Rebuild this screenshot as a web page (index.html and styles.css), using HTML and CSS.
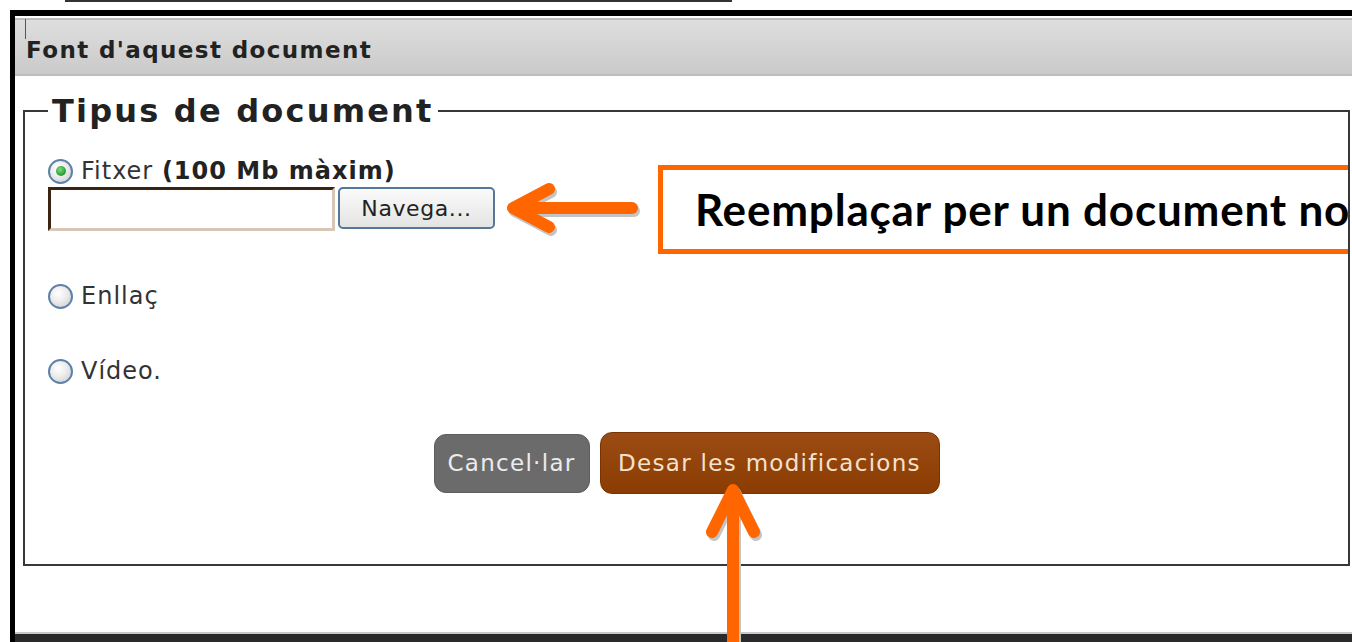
FILE: index.html
```html
<!DOCTYPE html>
<html lang="ca">
<head>
<meta charset="utf-8">
<title>Font d'aquest document</title>
<link rel="stylesheet" href="styles.css">
</head>
<body>
<div class="topline"></div>
<div class="frame">
  <div class="header"><span class="cursor"></span>Font d'aquest document</div>
  <fieldset class="doctype">
    <legend>Tipus de document</legend>
    <div class="opt opt-file"><span class="radio checked"></span><span class="lbl">Fitxer <b>(100 Mb màxim)</b></span></div>
    <div class="filerow"><span class="filebox"></span><span class="browse">Navega...</span></div>
    <div class="opt opt-link"><span class="radio"></span><span class="lbl">Enllaç</span></div>
    <div class="opt opt-video"><span class="radio"></span><span class="lbl">Vídeo.</span></div>
    <div class="actions">
      <button class="btn cancel">Cancel·lar</button>
      <button class="btn save">Desar les modificacions</button>
    </div>
  </fieldset>
  <div class="footer"></div>
</div>
<div class="callout">Reemplaçar per un document nou</div>
<svg class="arrows" width="1352" height="642" viewBox="0 0 1352 642">
  <g class="shadow" transform="translate(2 3)">
    <path d="M520 208 H632" stroke-linecap="butt"/>
    <path d="M549 189 L513 208 L549 227"/>
    <path d="M733 498 V660" stroke-linecap="butt"/>
    <path d="M712 532 L733 490 L754 532"/>
  </g>
  <g class="orange">
    <path d="M520 208 H632" stroke-linecap="butt"/>
    <path d="M549 189 L513 208 L549 227"/>
    <path d="M733 498 V660" stroke-linecap="butt"/>
    <path d="M712 532 L733 490 L754 532"/>
  </g>
</svg>
</body>
</html>
```
FILE: styles.css
```css
html, body {
  margin: 0;
  padding: 0;
}
body {
  width: 1352px;
  height: 642px;
  overflow: hidden;
  position: relative;
  background: #fff;
  font-family: "DejaVu Sans", Verdana, sans-serif;
  color: #333;
}
.topline {
  margin-left: 65px;
  width: 667px;
  height: 2px;
  background: #333;
}
.frame {
  margin: 8px 0 0 10px;
  border-top: 6px solid #000;
  border-left: 5px solid #000;
  height: 640px;
  display: flex;
  flex-direction: column;
}
.header {
  position: relative;
  margin-top: 2px;
  height: 48px;
  padding: 6px 0 0 11px;
  line-height: 48px;
  border-top: 2px solid #bdbdbd;
  border-bottom: 2px solid #bdbdbd;
  background: linear-gradient(#dedede, #cacaca);
  font-size: 23px;
  font-weight: bold;
  letter-spacing: 1.4px;
  color: #222;
}
.cursor {
  position: absolute;
  left: 10px;
  top: -1px;
  width: 1px;
  height: 20px;
  background: #555;
}
.doctype {
  margin: 16px 2px 0 8px;
  padding: 28px 23px 70px 23px;
  border: 2px solid #383838;
  min-width: 0;
}
.doctype legend {
  padding: 0 4px;
  font-size: 32px;
  font-weight: bold;
  letter-spacing: 2.2px;
  color: #222;
}
.opt {
  display: flex;
  align-items: center;
  height: 26px;
}
.opt-link { margin-top: 52px; }
.opt-video { margin-top: 49px; }
.radio {
  width: 25px;
  height: 25px;
  box-sizing: border-box;
  border-radius: 50%;
  border: 2px solid #5d81a8;
  background: radial-gradient(circle at 40% 35%, #ffffff 0%, #ececec 45%, #c9c9c9 100%);
  display: flex;
  align-items: center;
  justify-content: center;
  flex: none;
}
.radio.checked::after {
  content: "";
  width: 10px;
  height: 10px;
  border-radius: 50%;
  background: radial-gradient(circle at 40% 35%, #7fdc7f 0%, #2ea23c 60%, #1f8a2c 100%);
}
.lbl {
  margin-left: 8px;
  font-size: 24px;
  letter-spacing: 1px;
  line-height: 26px;
  white-space: nowrap;
  color: #333;
}
.lbl b {
  color: #222;
}
.filerow {
  display: flex;
  align-items: flex-start;
  margin-top: 3px;
}
.filebox {
  width: 287px;
  height: 44px;
  box-sizing: border-box;
  border: 3px solid;
  border-color: #3b2412 #d8c6b6 #d8c6b6 #3b2412;
  background: #fff;
}
.browse {
  margin-left: 3px;
  width: 157px;
  height: 42px;
  box-sizing: border-box;
  border: 2px solid #56779a;
  border-radius: 5px;
  background: linear-gradient(#fafafa, #e4e4e4);
  display: flex;
  align-items: center;
  justify-content: center;
  font-size: 22px;
  letter-spacing: 0.6px;
  color: #222;
}
.actions {
  margin-top: 48px;
  display: flex;
  justify-content: center;
  align-items: center;
  gap: 10px;
}
.btn {
  font-family: "DejaVu Sans", Verdana, sans-serif;
  font-size: 23px;
  letter-spacing: 1.3px;
  border-radius: 12px;
  cursor: pointer;
  box-sizing: border-box;
}
.cancel {
  width: 156px;
  height: 59px;
  padding: 0;
  background: #6b6b6b;
  border: 1px solid #5e5e5e;
  color: #ececec;
}
.save {
  width: 340px;
  height: 62px;
  padding: 0;
  background: linear-gradient(#9b4c14, #8a3c02);
  border: 1px solid #7a3402;
  color: #f4e2cf;
}
.footer {
  margin-top: 66px;
  height: 40px;
  border-top: 2px solid #c8c8c8;
  background: #2a2a2a;
}
.callout {
  position: absolute;
  left: 658px;
  top: 165px;
  width: 690px;
  height: 89px;
  box-sizing: border-box;
  border: 5px solid #ff6600;
  border-right: 0;
  overflow: hidden;
  background: #fff;
  padding-left: 32px;
  font-family: Lato, "Open Sans", sans-serif;
  font-weight: bold;
  font-size: 44px;
  letter-spacing: 0.8px;
  line-height: 79px;
  white-space: nowrap;
  color: #000;
}
.arrows {
  position: absolute;
  left: 0;
  top: 0;
  pointer-events: none;
}
.arrows path {
  fill: none;
  stroke-width: 12;
  stroke-linecap: round;
  stroke-linejoin: round;
}
.arrows .shadow path {
  stroke: #c4c4c4;
}
.arrows .orange path {
  stroke: #ff6600;
}
```
